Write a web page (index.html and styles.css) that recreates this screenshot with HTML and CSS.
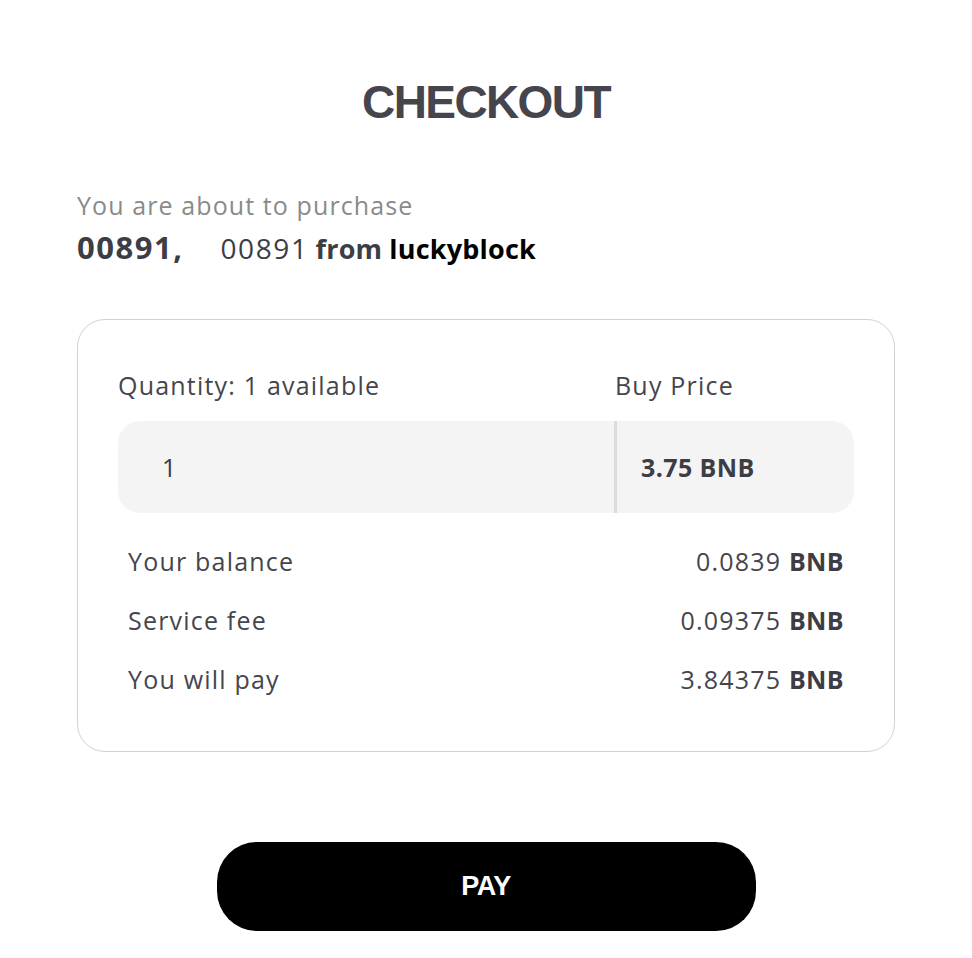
FILE: index.html
```html
<!DOCTYPE html>
<html>
<head>
<meta charset="utf-8">
<link rel="stylesheet" href="styles.css">
</head>
<body>
<main class="page">
  <h1 class="title">CHECKOUT</h1>
  <p class="intro">You are about to purchase</p>
  <p class="item"><span class="item-id">00891,</span><span class="item-name">00891</span> <span class="from">from</span> <span class="seller">luckyblock</span></p>
  <section class="card">
    <div class="labels">
      <span class="label-qty">Quantity: 1 available</span>
      <span class="label-price">Buy Price</span>
    </div>
    <div class="field">
      <div class="field-qty">1</div>
      <div class="field-price">3.75 BNB</div>
    </div>
    <div class="rows">
      <div class="row"><span>Your balance</span><span>0.0839 <b>BNB</b></span></div>
      <div class="row"><span>Service fee</span><span>0.09375 <b>BNB</b></span></div>
      <div class="row"><span>You will pay</span><span>3.84375 <b>BNB</b></span></div>
    </div>
  </section>
  <div class="actions"><button class="pay">PAY</button></div>
</main>
</body>
</html>
```
FILE: styles.css
```css
html, body {
  margin: 0;
  padding: 0;
  background: #fff;
}
body {
  font-family: "Open Sans", "Noto Sans", sans-serif;
  color: #45454d;
}
.page {
  width: 818px;
  margin: 0 auto;
  padding-top: 76px;
}
.title {
  margin: 0;
  text-align: center;
  font-family: "Liberation Sans", Arial, sans-serif;
  font-weight: 700;
  font-size: 46px;
  line-height: 52px;
  letter-spacing: -1.6px;
  color: #45454d;
}
.intro {
  margin: 62px 0 0;
  font-size: 25px;
  font-weight: 500;
  line-height: 30px;
  color: #8a8a8a;
  letter-spacing: 1.1px;
}
.item {
  margin: 10px 0 0;
  font-size: 27px;
  line-height: 34px;
  color: #3d3d45;
}
.item-id {
  font-weight: 700;
  font-size: 31px;
  letter-spacing: 1.5px;
  margin-right: 37px;
}
.item-name {
  font-weight: 500;
  font-size: 28px;
  letter-spacing: 1.6px;
}
.from {
  font-weight: 700;
  font-size: 27px;
  letter-spacing: 0.2px;
}
.seller {
  font-weight: 700;
  font-size: 27px;
  letter-spacing: 0.2px;
  color: #000;
}
.card {
  margin-top: 53px;
  border: 1.5px solid #d2d2d2;
  border-radius: 28px;
  padding: 50px 40px 57px 40px;
}
.labels {
  display: grid;
  grid-template-columns: 497px 1fr;
  font-size: 25px;
  font-weight: 500;
  line-height: 30px;
  letter-spacing: 1.2px;
  color: #45454d;
}
.field {
  margin-top: 21px;
  display: grid;
  grid-template-columns: 499px 1fr;
  height: 92px;
  background: #f4f4f4;
  border-radius: 22px;
  overflow: hidden;
  font-size: 25px;
  font-weight: 500;
  letter-spacing: 1.2px;
  color: #3d3d45;
}
.field-qty {
  display: flex;
  align-items: center;
  padding-left: 44px;
  border-right: 3px solid #dcdcdc;
}
.field-price {
  display: flex;
  align-items: center;
  padding-left: 24px;
  font-weight: 700;
  letter-spacing: 0.4px;
}
.rows {
  margin-top: 33px;
  padding: 0 10px;
  display: flex;
  flex-direction: column;
  gap: 29px;
}
.row {
  display: flex;
  justify-content: space-between;
  font-size: 25px;
  font-weight: 500;
  line-height: 30px;
  letter-spacing: 1.2px;
  color: #45454d;
}
.row b {
  font-weight: 700;
  letter-spacing: 0.4px;
  color: #3d3d45;
}
.actions {
  display: flex;
  justify-content: center;
  margin-top: 90px;
}
.pay {
  width: 539px;
  height: 89px;
  border: none;
  border-radius: 40px;
  background: #000;
  color: #fff;
  font-family: "Liberation Sans", Arial, sans-serif;
  font-weight: 700;
  font-size: 27px;
  letter-spacing: -0.5px;
  cursor: pointer;
}
```
